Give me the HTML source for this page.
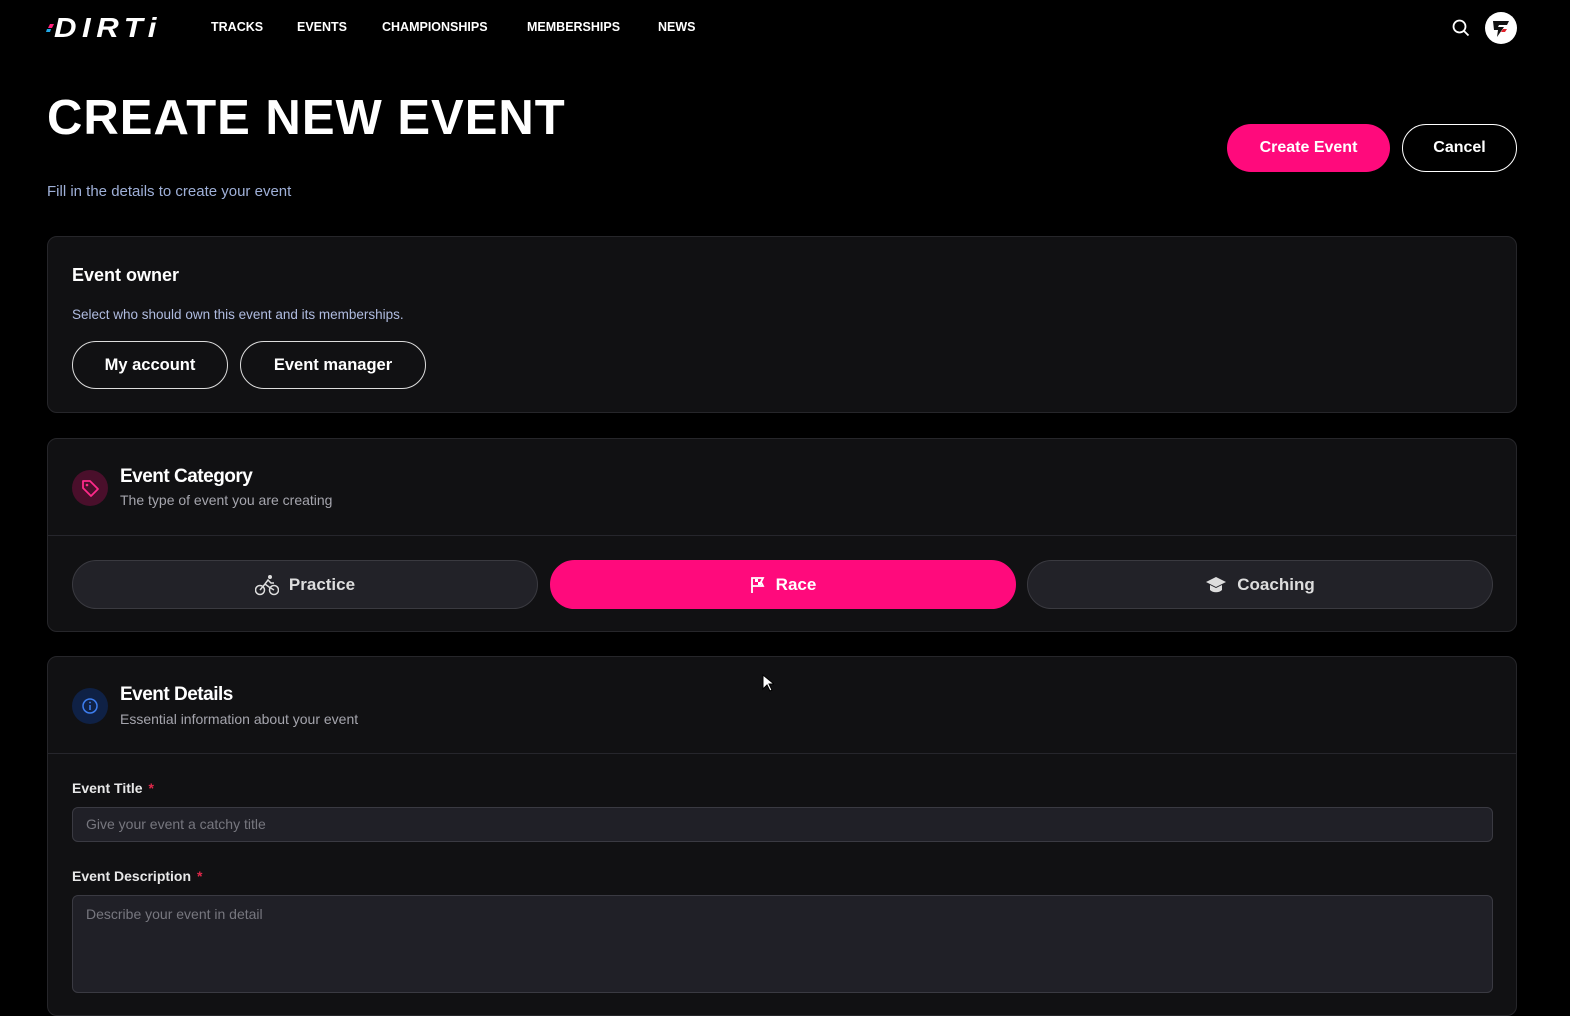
<!DOCTYPE html>
<html><head><meta charset="utf-8"><style>
*{box-sizing:border-box;margin:0;padding:0}
body{width:1570px;height:994px;overflow:hidden;background:#000;font-family:"Liberation Sans",sans-serif;color:#fff;position:relative}
.nav{position:absolute;top:20px;font-size:12.5px;font-weight:bold;letter-spacing:0}
h1{position:absolute;left:47px;top:90px;font-size:49px;font-weight:900;letter-spacing:1px}
.sub{position:absolute;left:47px;top:183px;font-size:15px;color:#9fb0d8}
.btn{position:absolute;border-radius:24px;font-weight:bold;font-size:16px;display:flex;align-items:center;justify-content:center}
.card{position:absolute;left:47px;width:1470px;background:#111113;border:1px solid #26262a;border-radius:10px}
.pill{position:absolute;top:121px;height:49px;width:466px;border-radius:25px;background:#222228;border:1px solid #3a3a40;display:flex;align-items:center;justify-content:center;gap:10px;font-weight:bold;font-size:17px;color:#ddd}
.ico{position:absolute;left:24px;width:36px;height:36px;border-radius:50%}
.ht{position:absolute;left:72px;font-size:19px;font-weight:bold;letter-spacing:-0.5px}
.hs{position:absolute;left:72px;font-size:14px;color:#a5a5ad}
.lbl{position:absolute;left:24px;font-size:14px;font-weight:bold;color:#e8e8e8}
.lbl b{color:#e0284a;margin-left:6px}
.inp{position:absolute;left:24px;width:1421px;background:#202027;border:1px solid #3a3a42;border-radius:6px;color:#77777f;font-size:14px;padding-left:13px}
</style></head><body>
<svg style="position:absolute;left:46px;top:14px" width="122" height="26" viewBox="0 0 122 26">
<polygon points="4,10 8,10 6,14 2,14" fill="#ff1f7a"/><polygon points="1,15 5,15 4,18 0,18" fill="#22a9e8"/>
<text x="8" y="23" font-family="Liberation Sans" font-weight="900" font-style="italic" font-size="28" fill="#fff" letter-spacing="5" textLength="108" lengthAdjust="spacingAndGlyphs">DIRTi</text></svg>
<div class="nav" style="left:211px">TRACKS</div>
<div class="nav" style="left:297px">EVENTS</div>
<div class="nav" style="left:382px">CHAMPIONSHIPS</div>
<div class="nav" style="left:527px">MEMBERSHIPS</div>
<div class="nav" style="left:658px">NEWS</div>
<svg style="position:absolute;left:1452px;top:19px" width="18" height="18" viewBox="0 0 18 18"><circle cx="7.5" cy="7.5" r="6" stroke="#fff" stroke-width="1.8" fill="none"/><line x1="12" y1="12" x2="16.5" y2="16.5" stroke="#fff" stroke-width="1.8"/></svg>
<svg style="position:absolute;left:1485px;top:12px" width="32" height="32" viewBox="0 0 32 32"><circle cx="16" cy="16" r="16" fill="#fff"/><path d="M8 9h16l-2 4h-8l-1 2h6l-7 10 1-7h-4z" fill="#111"/><path d="M18 17h4l-2 3h-4z" fill="#e0202a"/></svg>
<h1>CREATE NEW EVENT</h1>
<div class="sub">Fill in the details to create your event</div>
<div class="btn" style="left:1227px;top:124px;width:163px;height:48px;background:#ff0a7c">Create Event</div>
<div class="btn" style="left:1402px;top:124px;width:115px;height:48px;border:1.5px solid #fff">Cancel</div>

<div class="card" style="top:236px;height:177px">
<div style="position:absolute;left:24px;top:28px;font-size:18px;font-weight:bold">Event owner</div>
<div style="position:absolute;left:24px;top:70px;font-size:13.5px;color:#b0bce0">Select who should own this event and its memberships.</div>
<div class="btn" style="left:24px;top:104px;width:156px;height:48px;border:1.5px solid #ddd;font-size:16.5px">My account</div>
<div class="btn" style="left:192px;top:104px;width:186px;height:48px;border:1.5px solid #ddd;font-size:16.5px">Event manager</div>
</div>

<div class="card" style="top:438px;height:194px">
<div class="ico" style="top:31px;background:#4a0f2b"><svg width="36" height="36" viewBox="0 0 36 36"><path d="M11 11h7l8 8-7 7-8-8z" fill="none" stroke="#ff2a8a" stroke-width="1.8" stroke-linejoin="round"/><circle cx="15" cy="15" r="1.3" fill="#ff2a8a"/></svg></div>
<div class="ht" style="top:27px">Event Category</div>
<div class="hs" style="top:53px">The type of event you are creating</div>
<div style="position:absolute;left:0;right:0;top:96px;border-top:1px solid #26262c"></div>
<div class="pill" style="left:24px"><svg width="24" height="22" viewBox="0 0 24 22"><circle cx="5" cy="16" r="4.5" fill="none" stroke="#ddd" stroke-width="1.5"/><circle cx="19" cy="16" r="4.5" fill="none" stroke="#ddd" stroke-width="1.5"/><circle cx="15" cy="3" r="2" fill="#ddd"/><path d="M5 16l5-6 4 3 5 3M10 10l3-4 3 3h3" fill="none" stroke="#ddd" stroke-width="1.5"/></svg>Practice</div>
<div class="pill" style="left:502px;background:#ff0a7c;border-color:#ff0a7c;color:#fff"><svg width="16" height="18" viewBox="0 0 16 18"><path d="M2 17V2h11l-2 4 2 4H2" fill="none" stroke="#fff" stroke-width="1.8"/><rect x="5" y="3" width="3" height="3" fill="#fff"/><rect x="8" y="6" width="3" height="3" fill="#fff"/></svg>Race</div>
<div class="pill" style="left:979px"><svg width="22" height="18" viewBox="0 0 22 18"><path d="M11 1L1 6l10 5 10-5z" fill="#ddd"/><path d="M5 9v5c3 3 9 3 12 0V9l-6 3z" fill="#ddd"/></svg>Coaching</div>
</div>

<div class="card" style="top:656px;height:360px">
<div class="ico" style="top:31px;background:#0f2145"><svg width="36" height="36" viewBox="0 0 36 36"><circle cx="18" cy="18" r="7" fill="none" stroke="#3d7ef0" stroke-width="1.5"/><line x1="18" y1="17" x2="18" y2="22" stroke="#3d7ef0" stroke-width="1.5"/><circle cx="18" cy="14.5" r="0.9" fill="#3d7ef0"/></svg></div>
<div class="ht" style="top:27px">Event Details</div>
<div class="hs" style="top:54px">Essential information about your event</div>
<div style="position:absolute;left:0;right:0;top:96px;border-top:1px solid #26262c"></div>
<div class="lbl" style="top:123px">Event Title<b>*</b></div>
<div class="inp" style="top:150px;height:35px;line-height:33px">Give your event a catchy title</div>
<div class="lbl" style="top:211px">Event Description<b>*</b></div>
<div class="inp" style="top:238px;height:98px;padding-top:10px">Describe your event in detail</div>
</div>
<svg style="position:absolute;left:762px;top:674px" width="12" height="18" viewBox="0 0 12 18"><path d="M1 1v14l4-4 3 6 2-1-3-6h5z" fill="#fff" stroke="#000"/></svg>
</body></html>
